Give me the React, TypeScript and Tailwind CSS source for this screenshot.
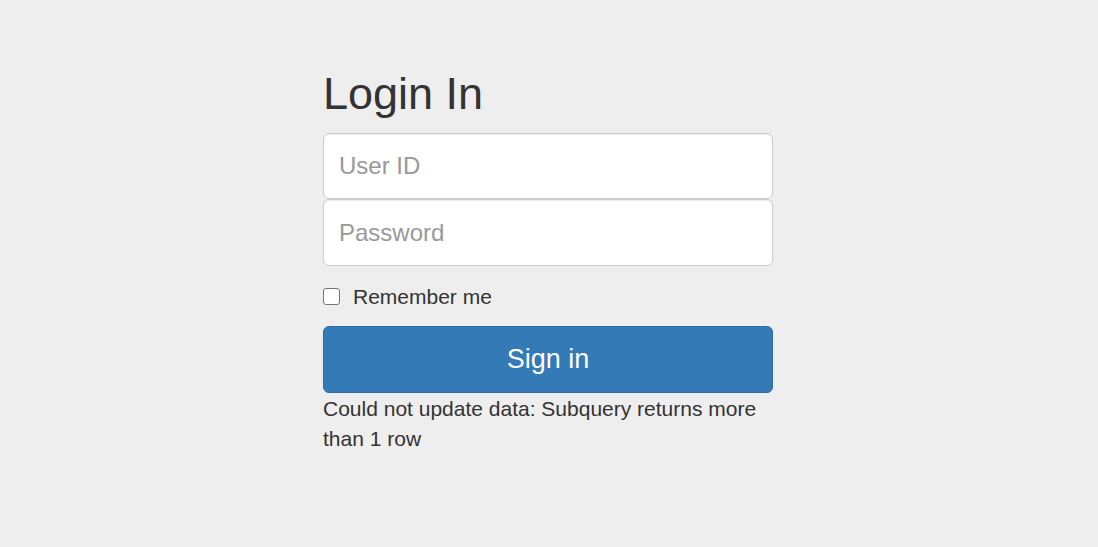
import React from "react";

export default function App() {
  return (
    <div className="min-h-[547px] w-full bg-[#eeeeee] text-[#333333] [font-family:'Liberation_Sans',Arial,sans-serif]">
      <div className="flex justify-center pt-[70px]">
        <form className="mr-[2px] w-[450px]" onSubmit={(e) => e.preventDefault()}>
          <h2 className="m-0 mb-[15px] h-[48px] text-[45px] leading-[48px] font-normal text-[#333333]">
            Login In
          </h2>
          <div className="flex flex-col">
            <input
              type="text"
              placeholder="User ID"
              className="h-[66px] w-full rounded-[6px] border border-[#cccccc] bg-white px-[15px] text-[24px] text-[#555555] shadow-[inset_0_1px_1px_rgba(0,0,0,0.075)] outline-none placeholder:text-[#999999]"
            />
            <input
              type="password"
              placeholder="Password"
              className="h-[67px] w-full rounded-[6px] border border-[#cccccc] bg-white px-[15px] text-[24px] text-[#555555] shadow-[inset_0_1px_1px_rgba(0,0,0,0.075)] outline-none placeholder:text-[#999999]"
            />
          </div>
          <label className="mt-[16px] flex h-[29px] items-center text-[21px] leading-[29px]">
            <input
              type="checkbox"
              className="m-0 h-[17px] w-[17px] appearance-none rounded-[3px] border border-[#767676] bg-white"
            />
            <span className="ml-[13px]">Remember me</span>
          </label>
          <button
            type="submit"
            className="mt-[15px] block h-[67px] w-full rounded-[6px] border border-[#2e6da4] bg-[#337ab7] text-[27px] text-white"
          >
            Sign in
          </button>
          <p className="m-0 mt-[1px] text-[21px] leading-[30px] text-[#333333]">
            Could not update data: Subquery returns more than 1 row
          </p>
        </form>
      </div>
    </div>
  );
}
